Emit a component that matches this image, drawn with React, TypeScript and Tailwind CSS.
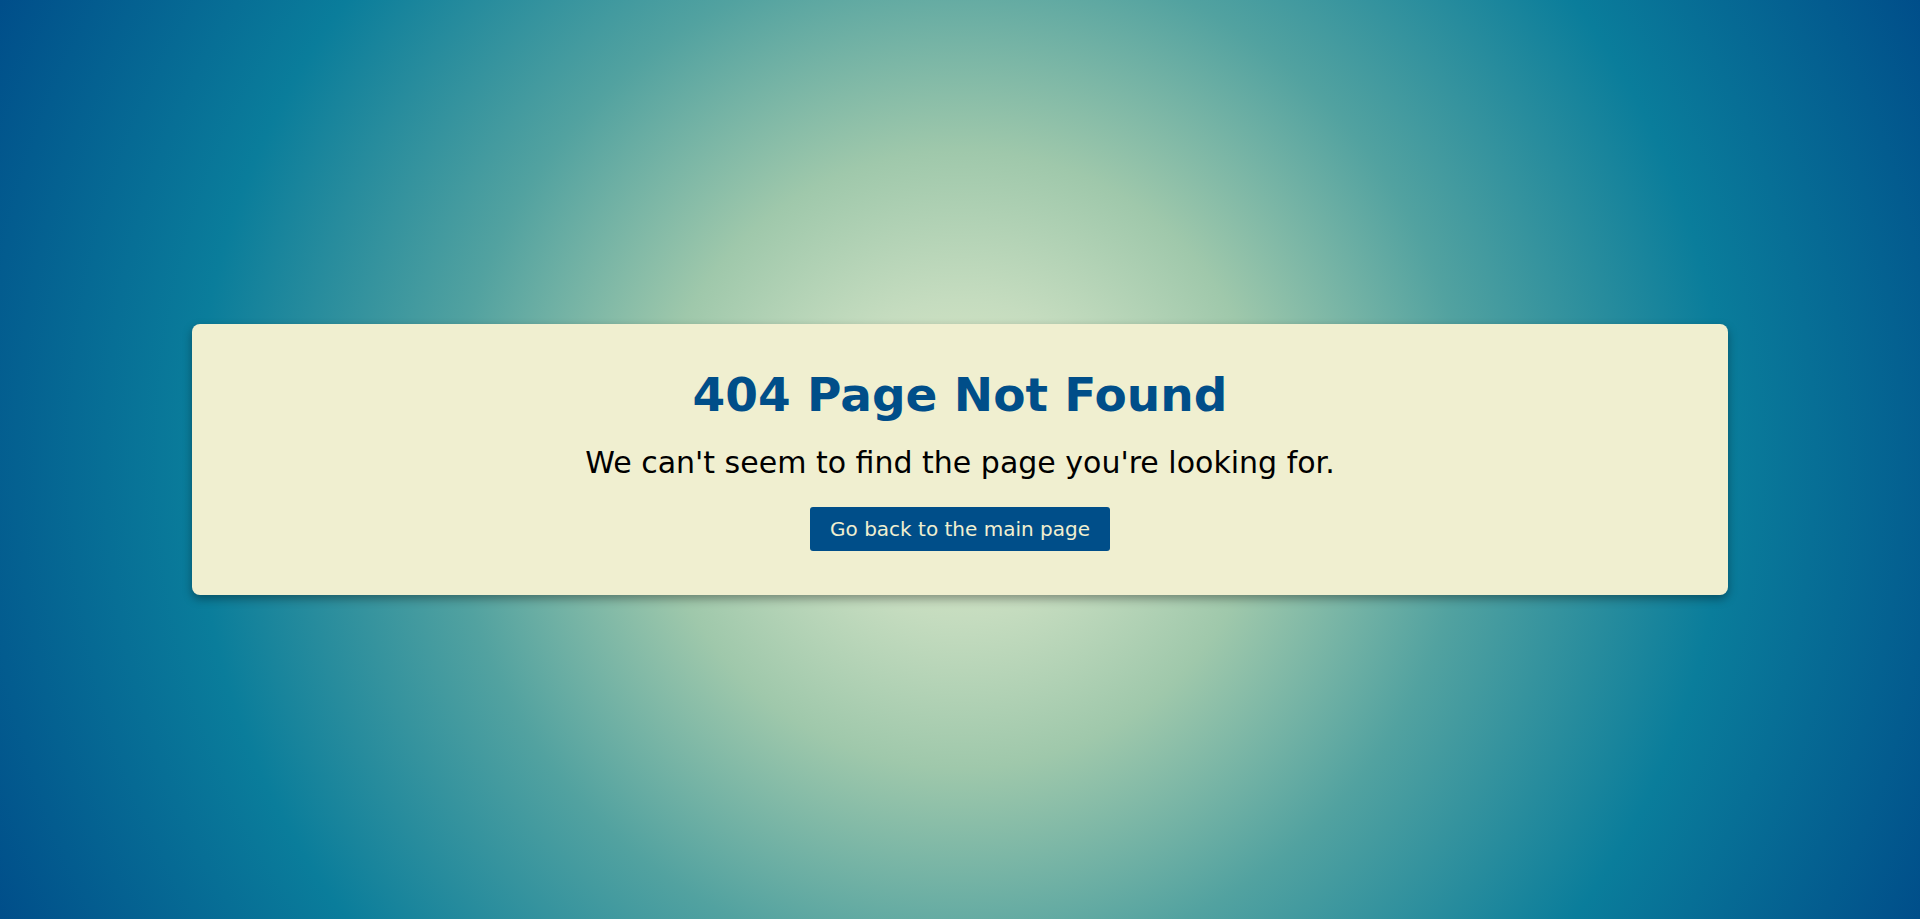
export default function App() {
  return (
    <div
      className="min-h-screen w-full flex items-center justify-center bg-[radial-gradient(circle,#e4eeca_0%,#c5dcbf_15%,#9fc8ab_29%,#52a2a0_48%,#0a7d9b_72%,#004e8a_100%)]"
      style={{ fontFamily: '"DejaVu Sans", "Liberation Sans", sans-serif' }}
    >
      <div className="w-[80%] rounded-lg bg-[#f0efd0] shadow-[0_4px_10px_rgba(0,0,0,0.35)] pt-[39px] pb-[44px] flex flex-col items-center">
        <h1 className="text-[47px] leading-[64px] font-bold text-[#004e89]">404 Page Not Found</h1>
        <p className="mt-[17px] text-[30px] leading-[38px] text-black">
          We can't seem to find the page you're looking for.
        </p>
        <a
          href="#"
          className="mt-[25px] h-[44px] px-5 flex items-center rounded-[3px] bg-[#004e89] text-[20px] text-[#f0efd0]"
        >
          Go back to the main page
        </a>
      </div>
    </div>
  );
}
